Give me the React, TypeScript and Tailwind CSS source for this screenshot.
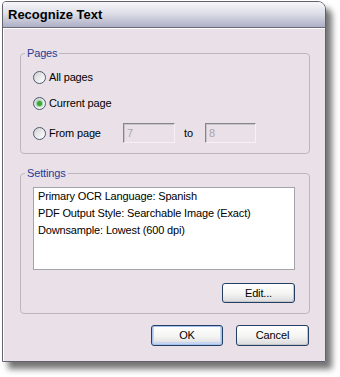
import React from 'react';

const Radio: React.FC<{ checked?: boolean; label: string }> = ({ checked, label }) => (
  <span className="flex items-center gap-[3px]">
    <span className="flex h-[13px] w-[13px] items-center justify-center rounded-full border border-[#4a5a6e] bg-[linear-gradient(135deg,#cfcfd3_0%,#ececee_55%,#ffffff_100%)]">
      {checked && <span className="h-[5px] w-[5px] rounded-full bg-[#3aa83a] shadow-[0_0_1px_1px_rgba(90,190,90,0.6)]" />}
    </span>
    <span>{label}</span>
  </span>
);

const DisabledInput: React.FC<{ value: string; width: string }> = ({ value, width }) => (
  <div
    className={`${width} h-[20px] border border-t-[#85858c] border-l-[#85858c] border-r-[#f5f1f5] border-b-[#f5f1f5] px-[3px] leading-[18px] text-[#aaa6ad] shadow-[inset_1px_1px_0_#c9c3ca]`}
  >
    {value}
  </div>
);

const Button: React.FC<{ label: string; isDefault?: boolean; className?: string }> = ({ label, isDefault, className }) => (
  <button
    className={`${className} rounded-[3px] border border-[#233f63] bg-[linear-gradient(to_bottom,#ffffff_0%,#f4f4f2_55%,#dadadd_100%)] text-[11px] text-black ${
      isDefault ? 'shadow-[inset_0_0_0_1px_#a9c2ec,inset_0_-1px_0_2px_#c6d6f2]' : 'shadow-[inset_-1px_-1px_0_#c7c5cc]'
    }`}
  >
    {label}
  </button>
);

export default function App() {
  return (
    <div className="h-[377px] w-[340px] bg-white pl-[2px] pt-[1px] font-['Liberation_Sans',Arial,sans-serif] text-[11px] tracking-[-0.15px] text-black">
      <div className="flex h-[361px] w-[324px] flex-col overflow-hidden rounded-tl-[4px] rounded-tr-[8px] border border-[#62626e] shadow-[6px_7px_6px_rgba(0,0,0,0.55)]">
        {/* Title bar */}
        <div className="h-[26px] shrink-0 border-b border-[#6a6a78] bg-[linear-gradient(to_bottom,#f7f7fa_0%,#dedfe8_45%,#adafc5_100%)] pl-[5px] pt-[3px] text-[13px] leading-[20px] font-bold tracking-normal">
          Recognize Text
        </div>

        {/* Body */}
        <div className="flex-1 border-l border-t border-white bg-[#e9e0e8] pl-[16px] pt-[17px]">
          {/* Pages */}
          <fieldset className="w-[290px] rounded-[4px] border border-[#bdb6be]">
            <legend className="ml-[4px] px-[2px] leading-[14px] text-[#1d3f97]">Pages</legend>
            <div className="flex flex-col pl-[12px] pt-[9px] pb-[10px]">
              <div className="flex h-[16px] items-center">
                <Radio label="All pages" />
              </div>
              <div className="mt-[10px] flex h-[16px] items-center">
                <Radio checked label="Current page" />
              </div>
              <div className="mt-[12px] flex h-[20px] items-center">
                <div className="w-[90px]">
                  <Radio label="From page" />
                </div>
                <DisabledInput value="7" width="w-[52px]" />
                <span className="ml-[9px]">to</span>
                <div className="ml-[12px]">
                  <DisabledInput value="8" width="w-[51px]" />
                </div>
              </div>
            </div>
          </fieldset>

          {/* Settings */}
          <fieldset className="mt-[12px] w-[290px] rounded-[4px] border border-[#bdb6be]">
            <legend className="ml-[4px] px-[2px] leading-[14px] text-[#1d3f97]">Settings</legend>
            <div className="flex flex-col pl-[12px] pr-[14px] pt-[7px] pb-[10px]">
              <div className="h-[83px] border border-[#a3a3ab] bg-white px-[4px] leading-[17px]">
                <div>Primary OCR Language: Spanish</div>
                <div>PDF Output Style: Searchable Image (Exact)</div>
                <div>Downsample: Lowest (600 dpi)</div>
              </div>
              <div className="mt-[13px] flex justify-end">
                <Button label="Edit..." className="h-[20px] w-[73px]" />
              </div>
            </div>
          </fieldset>

          {/* Dialog buttons */}
          <div className="mt-[11px] flex w-[290px] justify-end gap-[13px] pr-[1px]">
            <Button label="OK" isDefault className="h-[21px] w-[72px]" />
            <Button label="Cancel" className="h-[21px] w-[73px]" />
          </div>
        </div>
      </div>
    </div>
  );
}
